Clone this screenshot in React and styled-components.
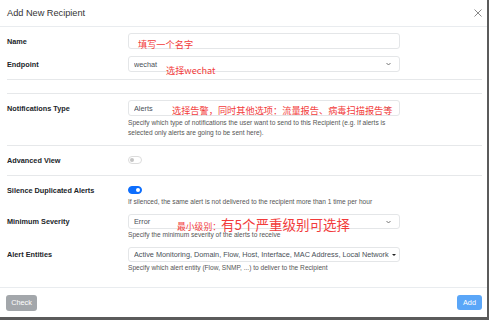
import React from "react";
import styled, { createGlobalStyle } from "styled-components";

const Global = createGlobalStyle`
  html, body { margin: 0; padding: 0; background: #5b5b5b; }
  body { font-family: "Liberation Sans", Arial, "Noto Sans CJK SC", sans-serif; }
  * { box-sizing: border-box; }
`;

const Modal = styled.div`
  width: 487px;
  height: 317px;
  background: #fff;
  display: flex;
  flex-direction: column;
`;

const Header = styled.div`
  height: 27px;
  flex: none;
  border-bottom: 1px solid #e9ecef;
  display: flex;
  align-items: center;
  justify-content: space-between;
  padding: 0 5px 0 7px;
`;

const Title = styled.div`
  font-size: 9.2px;
  color: #333;
`;

const Close = styled.svg`
  width: 8px;
  height: 8px;
  display: block;
`;

const Body = styled.div`
  flex: 1;
  padding: 6px 5px 0 7px;
  border-bottom: 1px solid #e9ecef;
  display: flex;
  flex-direction: column;
`;

const Row = styled.div`
  display: grid;
  grid-template-columns: 121px 272px;
  margin-top: ${(p) => p.$mt || 0}px;
`;

const Label = styled.div`
  height: ${(p) => p.$h}px;
  display: flex;
  align-items: center;
  font-size: 7.3px;
  font-weight: 700;
  color: #212529;
  white-space: nowrap;
`;

const Control = styled.div`
  display: flex;
  flex-direction: column;
`;

const Field = styled.div`
  position: relative;
  height: ${(p) => p.$h || 16}px;
  border: 1px solid #e4e6e8;
  border-radius: 3px;
  display: flex;
  align-items: center;
  padding: 0 10px 0 5px;
  font-size: 7.3px;
  color: #495057;
  white-space: nowrap;
`;

const FieldText = styled.span`
  overflow: hidden;
  flex: 1;
  min-width: 0;
`;

const Chevron = styled.svg`
  position: absolute;
  right: 8px;
  top: 50%;
  margin-top: -2px;
  width: 5px;
  height: 4px;
`;

const Caret = styled.span`
  position: absolute;
  right: 3px;
  top: 50%;
  margin-top: -1px;
  width: 0;
  height: 0;
  border-left: 2px solid transparent;
  border-right: 2px solid transparent;
  border-top: 2.5px solid #222;
`;

const Help = styled.div`
  margin-top: ${(p) => p.$mt || 0}px;
  font-size: 6.6px;
  line-height: 10px;
  color: #555;
  white-space: nowrap;
`;

const Divider = styled.div`
  height: 1px;
  background: #e6e8ea;
  margin-top: ${(p) => p.$mt}px;
`;

const ToggleWrap = styled.div`
  height: ${(p) => p.$h}px;
  display: flex;
  align-items: center;
`;

const Toggle = styled.div`
  position: relative;
  width: 14px;
  height: 7.5px;
  border-radius: 4px;
  border: 1px solid ${(p) => (p.$on ? "#0d6efd" : "#dcdcdc")};
  background: ${(p) => (p.$on ? "#0d6efd" : "#fff")};
  &::after {
    content: "";
    position: absolute;
    top: 0.75px;
    left: ${(p) => (p.$on ? "7px" : "1px")};
    width: 4px;
    height: 4px;
    border-radius: 50%;
    background: ${(p) => (p.$on ? "#fff" : "#c4c4c4")};
  }
`;

const Note = styled.span`
  position: absolute;
  left: ${(p) => p.$x}px;
  top: ${(p) => p.$y}px;
  color: #f23b3b;
  font-family: "Noto Sans CJK SC", "Liberation Sans", sans-serif;
  font-size: ${(p) => p.$fs || 9.2}px;
  line-height: 12px;
  white-space: nowrap;
  pointer-events: none;
`;

const Big = styled.span`
  font-size: 13.5px;
`;

const Footer = styled.div`
  height: 29px;
  flex: none;
  display: flex;
  align-items: center;
  justify-content: space-between;
  padding: 0 5px 0 6px;
`;

const Button = styled.button`
  height: ${(p) => p.$h}px;
  width: ${(p) => p.$w}px;
  border: none;
  border-radius: 3px;
  background: ${(p) => p.$bg};
  color: #fff;
  font-family: "Liberation Sans", Arial, sans-serif;
  font-size: 7.3px;
  padding: 0;
  display: flex;
  align-items: center;
  justify-content: center;
`;

const ChevronIcon = () => (
  <Chevron viewBox="0 0 5 4">
    <path d="M0.5 1 L2.5 3 L4.5 1" fill="none" stroke="#666" strokeWidth="0.9" />
  </Chevron>
);

export default function App() {
  return (
    <>
      <Global />
      <Modal>
        <Header>
          <Title>Add New Recipient</Title>
          <Close viewBox="0 0 8 8">
            <path d="M0.5 0.5 L7.5 7.5 M7.5 0.5 L0.5 7.5" stroke="#8a8a8a" strokeWidth="1" />
          </Close>
        </Header>
        <Body>
          <Row>
            <Label $h={16}>Name</Label>
            <Control>
              <Field>
                <Note $x={9} $y={4}>填写一个名字</Note>
              </Field>
            </Control>
          </Row>
          <Row $mt={7}>
            <Label $h={16}>Endpoint</Label>
            <Control>
              <Field>
                <FieldText>wechat</FieldText>
                <ChevronIcon />
                <Note $x={37} $y={7}>选择wechat</Note>
              </Field>
            </Control>
          </Row>
          <Divider $mt={7} />
          <Divider $mt={13} />
          <Row $mt={6}>
            <Label $h={16}>Notifications Type</Label>
            <Control>
              <Field>
                <FieldText>Alerts</FieldText>
                <ChevronIcon />
                <Note $x={43} $y={3}>选择告警，同时其他选项：流量报告、病毒扫描报告等</Note>
              </Field>
              <Help $mt={2}>
                Specify which type of notifications the user want to send to this Recipient (e.g. If alerts is
                <br />
                selected only alerts are going to be sent here).
              </Help>
            </Control>
          </Row>
          <Divider $mt={7} />
          <Row $mt={6}>
            <Label $h={16}>Advanced View</Label>
            <Control>
              <ToggleWrap $h={16}>
                <Toggle />
              </ToggleWrap>
            </Control>
          </Row>
          <Divider $mt={7} />
          <Row $mt={8}>
            <Label $h={12}>Silence Duplicated Alerts</Label>
            <Control>
              <ToggleWrap $h={12}>
                <Toggle $on />
              </ToggleWrap>
              <Help $mt={1}>
                If silenced, the same alert is not delivered to the recipient more than 1 time per hour
              </Help>
            </Control>
          </Row>
          <Row $mt={7}>
            <Label $h={15}>Minimum Severity</Label>
            <Control>
              <Field $h={15}>
                <FieldText>Error</FieldText>
                <ChevronIcon />
                <Note $x={48} $y={3} $fs={8.8}>
                  最小级别：<Big>有5个严重级别可选择</Big>
                </Note>
              </Field>
              <Help $mt={1}>Specify the minimum severity of the alerts to receive</Help>
            </Control>
          </Row>
          <Row $mt={7}>
            <Label $h={15}>Alert Entities</Label>
            <Control>
              <Field $h={15}>
                <FieldText>
                  Active Monitoring, Domain, Flow, Host, Interface, MAC Address, Local Network, Network, Other, Pool, SNMP, System
                </FieldText>
                <Caret />
              </Field>
              <Help $mt={1}>Specify which alert entity (Flow, SNMP, ...) to deliver to the Recipient</Help>
            </Control>
          </Row>
        </Body>
        <Footer>
          <Button $w={31} $h={16} $bg="#a3a7ab">Check</Button>
          <Button $w={25} $h={15} $bg="#5aa6f8">Add</Button>
        </Footer>
      </Modal>
    </>
  );
}
